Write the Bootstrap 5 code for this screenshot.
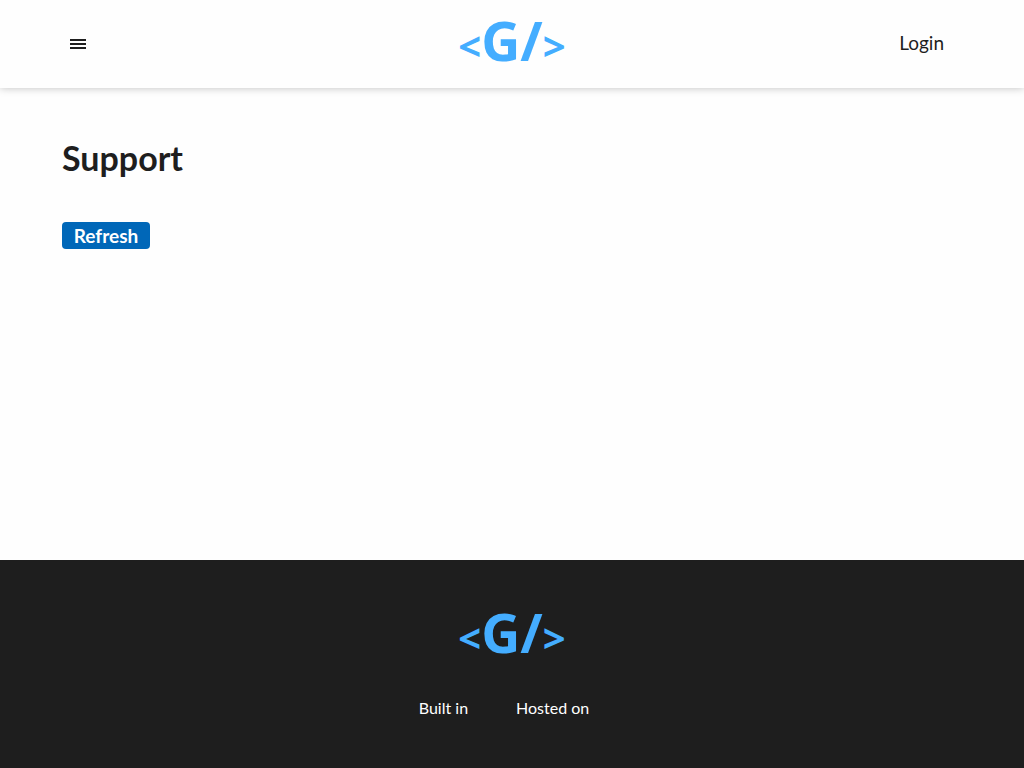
<!DOCTYPE html>
<html lang="en">
<head>
<meta charset="utf-8">
<meta name="viewport" content="width=device-width, initial-scale=1">
<title>Support</title>
<link href="https://cdn.jsdelivr.net/npm/bootstrap@5.3.0/dist/css/bootstrap.min.css" rel="stylesheet">
<style>
body { font-family: Lato, sans-serif; color: #1e1e1e; background: #fefefe; }
.site-header { height: 88px; padding: 0 62px; background: #fefefe; box-shadow: 0 0 8px rgba(0,0,0,.25); }
.site-logo { font: 700 54px/64px "Noto Sans", sans-serif; color: #44adff; padding-bottom: 8px; }
.logo-bracket { font-size: 40px; line-height: 1; }
.menu-btn { width: 32px; height: 32px; color: #1e1e1e; }
.login-link { font-size: 19px; line-height: 24px; color: #1e1e1e; padding: 0 18px 2px; }
.page-main { padding: 48px 62px; }
.page-title { font-size: 34px; font-weight: 700; line-height: 44px; margin-bottom: 42px; }
.refresh-btn { font-size: 19px; font-weight: 700; line-height: 26px; color: #fff; background: #0067b8; border-radius: 4px; width: 88px; height: 27px; }
.refresh-btn:hover { color: #fff; background: #005a9e; }
.site-footer { background: #1e1e1e; height: 208px; padding-top: 40px; }
.credits { gap: 48px; font-size: 16px; line-height: 24px; margin-top: 24px; padding-right: 16px; }
</style>
</head>
<body class="d-flex flex-column min-vh-100">
<header class="site-header">
  <nav class="row g-0 h-100 align-items-center" aria-label="Main">
    <div class="col"><button type="button" class="menu-btn btn border-0 p-0 d-flex align-items-center justify-content-center" aria-label="Menu">
      <svg width="16" height="10" viewBox="0 0 16 10" fill="currentColor" shape-rendering="crispEdges" aria-hidden="true"><path d="M0 0h16v2H0zM0 4h16v2H0zM0 8h16v2H0z"/></svg>
    </button></div>
    <div class="col-auto"><a href="#" class="site-logo text-decoration-none d-block"><span class="logo-bracket">&lt;</span>G/<span class="logo-bracket">&gt;</span></a></div>
    <div class="col d-flex justify-content-end"><a href="#" class="login-link text-decoration-none">Login</a></div>
  </nav>
</header>
<main class="page-main flex-grow-1">
  <h1 class="page-title">Support</h1>
  <button type="button" class="refresh-btn btn border-0 p-0 d-block">Refresh</button>
</main>
<footer class="site-footer text-white text-center">
  <a href="#" class="site-logo text-decoration-none d-block"><span class="logo-bracket">&lt;</span>G/<span class="logo-bracket">&gt;</span></a>
  <div class="credits d-flex justify-content-center"><span>Built in</span><span>Hosted on</span></div>
</footer>
<script src="https://cdn.jsdelivr.net/npm/bootstrap@5.3.0/dist/js/bootstrap.bundle.min.js"></script>
</body>
</html>
